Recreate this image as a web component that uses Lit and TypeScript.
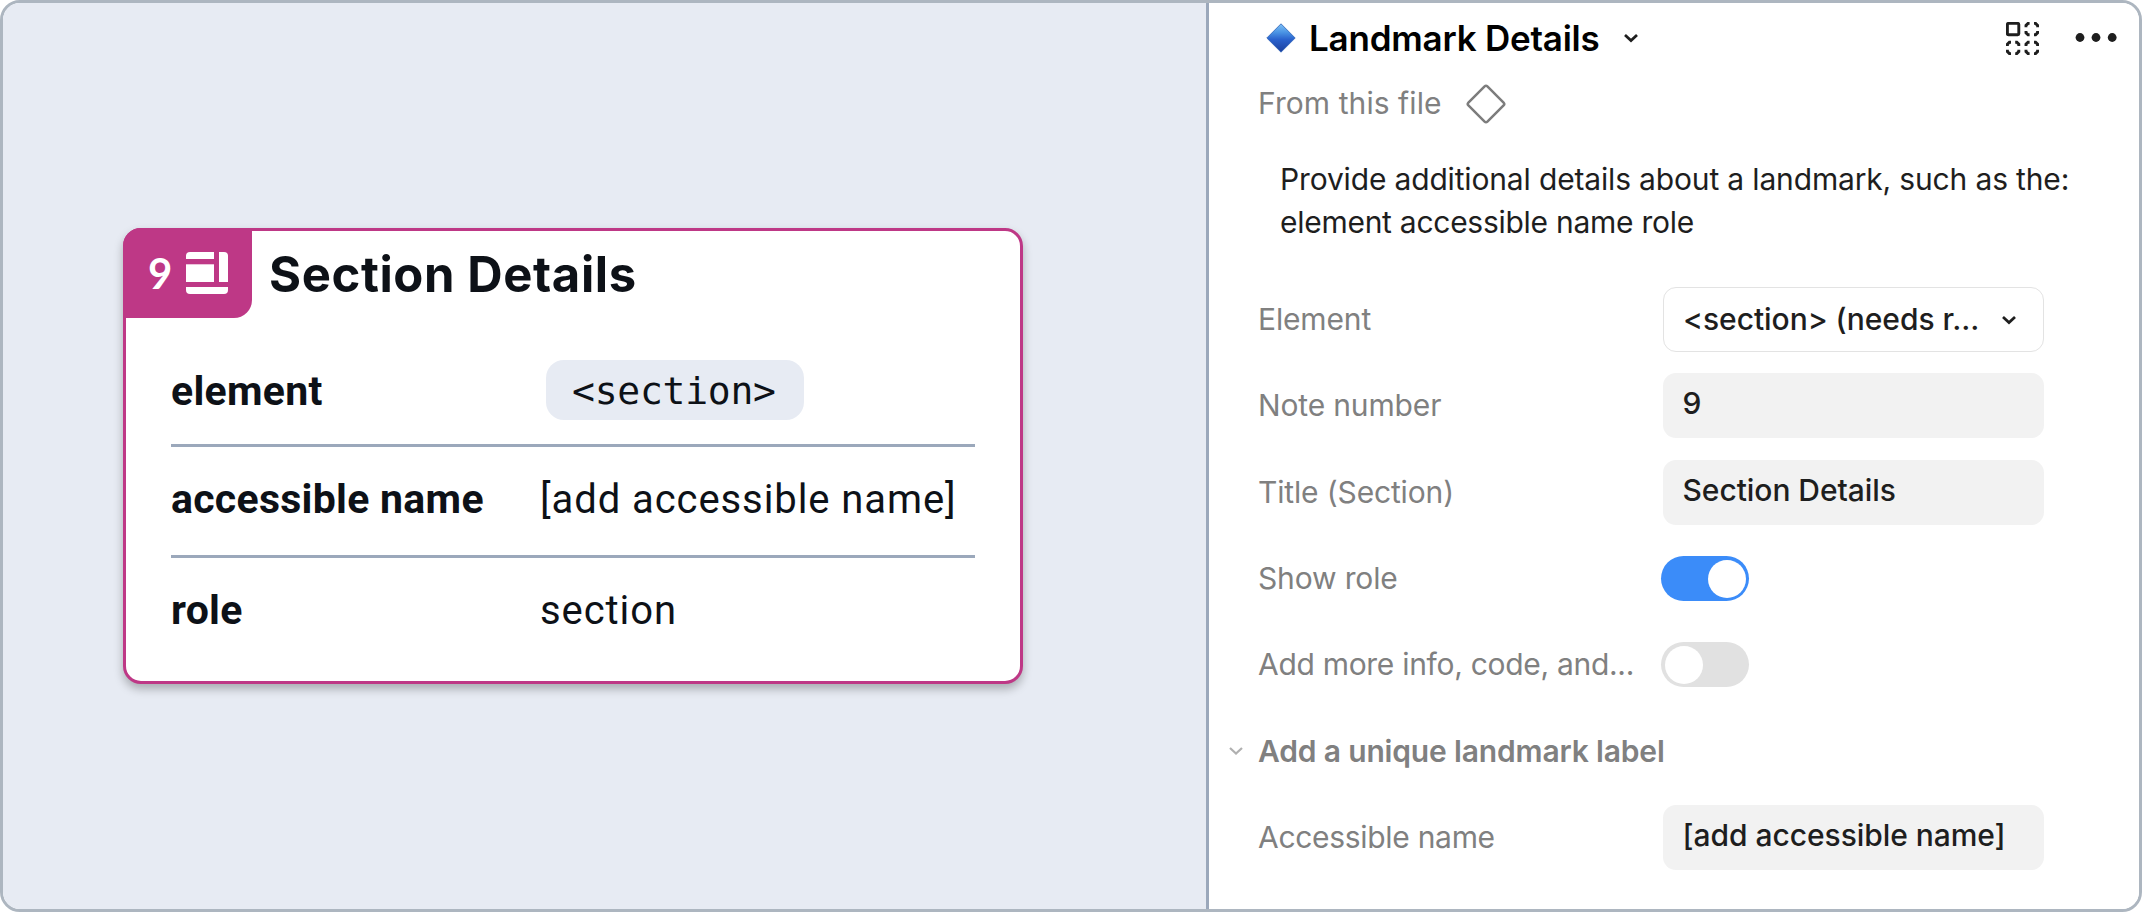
import { LitElement, html, svg, css } from "lit";
import { customElement, property } from "lit/decorators.js";
import { classMap } from "lit/directives/class-map.js";

@customElement("detail-card")
class DetailCard extends LitElement {
  static styles = css`
    :host {
      display: block;
      box-sizing: border-box;
      width: 900px;
      height: 456px;
      border: 3px solid #be3886;
      border-radius: 18px;
      background: #fff;
      color: #0d1117;
      font-family: Roboto, "Liberation Sans", sans-serif;
      box-shadow: 0 5px 10px rgba(0, 0, 0, 0.27);
    }
    .head {
      display: flex;
      height: 87px;
    }
    .badge {
      display: flex;
      align-items: center;
      box-sizing: border-box;
      width: 129px;
      height: 90px;
      margin: -3px 0 0 -3px;
      padding-left: 25px;
      gap: 13.6px;
      border-radius: 18px 0 18px 0;
      background: #be3886;
      color: #fff;
      font: 700 42px/50px Lato, sans-serif;
    }
    .title {
      margin: 0 0 0 17px;
      font-family: Inter, "Liberation Sans", sans-serif;
      font-size: 49px;
      font-weight: 680;
      line-height: 88px;
      letter-spacing: 0.6px;
    }
    .rows {
      padding: 18px 45px 0 45px;
    }
    .row {
      display: grid;
      grid-template-columns: 369px 1fr;
      align-items: center;
      box-sizing: border-box;
      height: 111px;
      border-bottom: 3px solid #9ba8bb;
      padding-bottom: 4px;
      line-height: 48px;
      white-space: nowrap;
    }
    .row.first {
      padding-bottom: 0;
    }
    .row.last {
      height: 104px;
      padding-bottom: 0;
      border-bottom: 0;
    }
    .key {
      font-size: 41px;
      font-weight: 700;
      letter-spacing: 0.28px;
    }
    .first .key {
      padding-top: 2px;
    }
    .value {
      padding-top: 2px;
      font-size: 40px;
      letter-spacing: 0.92px;
    }
    .chip {
      display: inline-block;
      box-sizing: border-box;
      width: 258px;
      height: 60px;
      margin-left: 6px;
      padding: 3px 0 0 26px;
      border-radius: 18px;
      background: #e7ebf3;
      font: 38px/57px "DejaVu Sans Mono", monospace;
      letter-spacing: -0.25px;
      vertical-align: top;
    }
  `;

  render() {
    return html`
      <div class="head">
        <div class="badge">
          <span>9</span>
          <svg width="42" height="42" viewBox="0 0 42 42" fill="#fff">
            <path d="M4 0h24v7H0V4a4 4 0 0 1 4-4z" />
            <path d="M0 12.3h28V30H0z" />
            <path d="M33 0h5a4 4 0 0 1 4 4v26h-9z" />
            <path d="M0 35h42v3a4 4 0 0 1-4 4H4a4 4 0 0 1-4-4z" />
          </svg>
        </div>
        <h1 class="title">Section Details</h1>
      </div>
      <div class="rows">
        <div class="row first">
          <span class="key">element</span>
          <span><code class="chip">&lt;section&gt;</code></span>
        </div>
        <div class="row">
          <span class="key">accessible name</span>
          <span class="value">[add accessible name]</span>
        </div>
        <div class="row last">
          <span class="key">role</span>
          <span class="value">section</span>
        </div>
      </div>
    `;
  }
}

@customElement("toggle-switch")
class ToggleSwitch extends LitElement {
  @property({ type: Boolean }) on = false;

  static styles = css`
    :host {
      display: block;
      margin-left: -2px;
    }
    .track {
      display: flex;
      box-sizing: border-box;
      width: 88px;
      height: 45px;
      padding: 3.5px;
      border-radius: 22.5px;
      background: #e1e1e1;
    }
    .track.on {
      justify-content: flex-end;
      background: #3b8cf9;
    }
    .knob {
      width: 38px;
      height: 38px;
      border-radius: 50%;
      background: #fff;
    }
  `;

  render() {
    return html`<div class=${classMap({ track: true, on: this.on })}><div class="knob"></div></div>`;
  }
}

const chevron = (width: number, color: string, weight: number) => svg`
  <svg width=${width} height="10" viewBox="0 0 16 10" fill="none" stroke=${color} stroke-width=${weight}>
    <path d="M2 2l6 5.6L14 2" />
  </svg>`;

@customElement("property-panel")
class PropertyPanel extends LitElement {
  static styles = css`
    :host {
      display: block;
      box-sizing: border-box;
      padding-left: 49px;
      background: #fff;
      color: #1e1e1e;
      font: 30px/43px Inter, "Liberation Sans", sans-serif;
      white-space: nowrap;
    }
    svg {
      display: block;
      flex: none;
    }
    .header {
      display: flex;
      align-items: center;
      height: 70px;
      padding: 0 22px 0 8px;
    }
    .name {
      margin: 0 23px 0 13px;
      font-size: 35px;
      font-weight: 600;
      letter-spacing: -0.22px;
      color: #000;
    }
    .tools {
      display: flex;
      align-items: center;
      gap: 36px;
      margin-left: auto;
    }
    .source {
      display: flex;
      align-items: center;
      gap: 24px;
      height: 61px;
      color: #808080;
      letter-spacing: 0.07px;
    }
    .description {
      margin: 24px 0 32.5px 22px;
      font-weight: 420;
      letter-spacing: -0.16px;
    }
    .narrow {
      letter-spacing: -0.27px;
    }
    .row {
      display: grid;
      grid-template-columns: 405px 380.5px;
      align-items: center;
      height: 86.33px;
    }
    .label {
      color: #808080;
      letter-spacing: -0.15px;
    }
    .label.tight {
      letter-spacing: -0.3px;
    }
    .field {
      box-sizing: border-box;
      height: 65px;
      padding: 9px 20px 0 19.5px;
      border-radius: 13px;
      background: #f2f2f2;
      font-weight: 450;
      letter-spacing: -0.05px;
    }
    .select {
      display: flex;
      align-items: center;
      justify-content: space-between;
      padding: 0 26px 0 19px;
      border: 1.5px solid #e3e3e3;
      background: #fff;
    }
    .group {
      display: flex;
      align-items: center;
      gap: 14px;
      height: 86.33px;
      margin-left: -30px;
      color: #808080;
      font-weight: 600;
      letter-spacing: -0.16px;
    }
  `;

  render() {
    return html`
      <div class="header">
        <svg width="30" height="30" viewBox="0 0 30 30">
          <defs>
            <linearGradient id="gem" x1="0" y1="0" x2="0" y2="1">
              <stop offset="0" stop-color="#7fc0f5" />
              <stop offset="0.3" stop-color="#4a94e4" />
              <stop offset="0.55" stop-color="#2a62cd" />
              <stop offset="1" stop-color="#1c3f9c" />
            </linearGradient>
          </defs>
          <path d="M15 .8 29.2 15 15 29.2.8 15z" fill="url(#gem)" stroke="#2c62b8" stroke-width=".8" stroke-linejoin="round" />
        </svg>
        <h2 class="name">Landmark Details</h2>
        ${chevron(16, "#1e1e1e", 2.7)}
        <div class="tools">
          <svg width="33" height="33" viewBox="0 0 33 33" fill="none" stroke="#1e1e1e" stroke-width="2.9">
            <rect x="1.4" y="1.4" width="11.4" height="11.4" rx="1" />
            <path d="M20 5.2V3.4l2-2h1.6M28 1.4h1.6l2 2v1.8M31.600 9v1.800l-2 2H28M23.600 12.800H22l-2-2V9" />
            <path d="M1.400 24v-1.800l2-2H5M9.200 20.200h1.600l2 2V24M12.800 27.800v1.800l-2 2H9.200M5 31.600H3.400l-2-2v-1.800" />
            <path d="M20 24v-1.800l2-2h1.600M28 20.200h1.600l2 2V24M31.600 27.800v1.800l-2 2H28M23.600 31.600H22l-2-2v-1.800" />
          </svg>
          <svg width="42" height="10" viewBox="0 0 42 10" fill="#1e1e1e">
            <circle cx="5" cy="4.500" r="4.400" />
            <circle cx="21" cy="4.500" r="4.400" />
            <circle cx="37.200" cy="4.500" r="4.400" />
          </svg>
        </div>
      </div>
      <div class="source">
        <span>From this file</span>
        <svg width="40" height="40" viewBox="0 0 40 40" fill="none" stroke="#7d7d7d" stroke-width="2.500">
          <path d="M18.600 2.400a2 2 0 0 1 2.800 0L37.600 18.600a2 2 0 0 1 0 2.800L21.400 37.600a2 2 0 0 1-2.800 0L2.400 21.400a2 2 0 0 1 0-2.800z" />
        </svg>
      </div>
      <div class="description">
        <div>Provide additional details about a landmark, such as the:</div>
        <div class="narrow">element accessible name role</div>
      </div>
      <div class="row">
        <span class="label">Element</span>
        <div class="field select"><span>&lt;section&gt; (needs r...</span>${chevron(16, "#1e1e1e", 2.7)}</div>
      </div>
      <div class="row">
        <span class="label">Note number</span>
        <div class="field">9</div>
      </div>
      <div class="row">
        <span class="label">Title (Section)</span>
        <div class="field">Section Details</div>
      </div>
      <div class="row">
        <span class="label">Show role</span>
        <toggle-switch on></toggle-switch>
      </div>
      <div class="row">
        <span class="label tight">Add more info, code, and...</span>
        <toggle-switch></toggle-switch>
      </div>
      <div class="group">${chevron(16, "#b0b0b0", 2.2)}<span>Add a unique landmark label</span></div>
      <div class="row">
        <span class="label tight">Accessible name</span>
        <div class="field">[add accessible name]</div>
      </div>
    `;
  }
}

@customElement("app-root")
class AppRoot extends LitElement {
  static styles = css`
    :host {
      display: block;
      background: #fff;
    }
    .frame {
      display: grid;
      grid-template-columns: 1203px 1fr;
      box-sizing: border-box;
      width: 2142px;
      height: 912px;
      overflow: hidden;
      border: 3px solid #adb6c0;
      border-radius: 20px;
    }
    .canvas {
      padding: 225px 0 0 120px;
      background: #e7ebf3;
    }
    .panel {
      border-left: 3px solid #9ba8bb;
    }
  `;

  render() {
    return html`
      <div class="frame">
        <div class="canvas"><detail-card></detail-card></div>
        <property-panel class="panel"></property-panel>
      </div>
    `;
  }
}
